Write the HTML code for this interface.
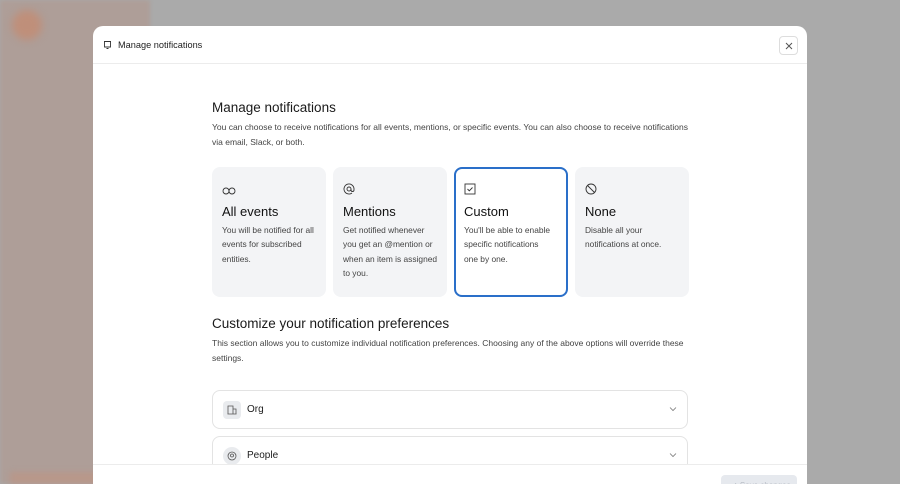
<!DOCTYPE html>
<html><head><meta charset="utf-8"><style>
*{box-sizing:border-box;margin:0;padding:0}
html,body{width:900px;height:484px;overflow:hidden}
body{background:#aaaaaa;font-family:"Liberation Sans",sans-serif;position:relative;color:#1c1c1c}
.side{position:absolute;left:0;top:0;width:150px;height:484px;background:#ae9e98;filter:blur(2px)}
.blob{position:absolute;left:12px;top:10px;width:30px;height:30px;border-radius:50%;background:#bf8f7a;filter:blur(4px)}
.bar{position:absolute;left:10px;top:472px;width:130px;height:12px;background:#b8978a;filter:blur(3px)}
.modal{position:absolute;left:93px;top:26px;width:714px;height:458px;background:#fff;border-radius:10px 10px 0 0;overflow:hidden}
.hdr{height:38px;border-bottom:1px solid #ececec;display:flex;align-items:center;padding-left:10px;font-size:9.2px;color:#222}
.hdr svg{margin-right:6px}
.close{position:absolute;right:9px;top:10px;width:19px;height:19px;border:1px solid #ddd;border-radius:4px;display:flex;align-items:center;justify-content:center}
.c{position:absolute;left:119px;width:478px}
h2{font-size:13.5px;font-weight:normal;color:#1a1a1a}
p.d{font-size:8.5px;line-height:14.5px;color:#444;margin-top:5px}
.cards{position:absolute;left:119px;top:141px;display:flex;gap:7px}
.card{width:114px;height:130px;background:#f3f4f6;border-radius:8px;padding:15px 8px 15px 10px}
.card.sel{background:#fff;border:2px solid #2a6fc9;padding:13px 10px 13px 8px}
.card h3{font-size:13px;font-weight:normal;margin-top:4px;color:#111}
.card p{font-size:8.4px;line-height:14.3px;color:#444;margin-top:4px}
.acc{position:absolute;left:119px;width:476px;height:39px;border:1px solid #e3e3e3;border-radius:8px;display:flex;align-items:center;padding-left:10px;font-size:10px}
.ico{width:18px;height:18px;background:#e9ebee;border-radius:4px;margin-right:6px;display:flex;align-items:center;justify-content:center}
.chev{position:absolute;right:10px;top:14px}
.foot{position:absolute;left:0;top:438px;width:714px;height:42px;background:#fff;border-top:1px solid #ececec}
.save{position:absolute;right:10px;top:10px;width:76px;height:22px;background:#e6e9ee;border-radius:4px;font-size:8px;color:#b5bac2;padding:6px 0 0 10px}
</style></head><body>
<div class="side"></div><div class="blob"></div><div class="bar"></div>
<div class="modal">
<div class="hdr"><svg width="9" height="10" viewBox="0 0 9 10" fill="none" stroke="#333" stroke-width="0.9"><path d="M1 1.5h7M1.5 1.5v5.5h6V1.5M3.5 8.5h2"/></svg>Manage notifications</div>
<div class="close"><svg width="8" height="8" viewBox="0 0 8 8" stroke="#555" stroke-width="1"><path d="M1 1l6 6M7 1L1 7"/></svg></div>
<div class="c" style="top:74px"><h2>Manage notifications</h2><p class="d">You can choose to receive notifications for all events, mentions, or specific events. You can also choose to receive notifications via email, Slack, or both.</p></div>
<div class="cards">
<div class="card"><svg width="14" height="8" viewBox="0 0 14 8" fill="none" stroke="#333" stroke-width="0.9"><circle cx="4" cy="4" r="3"/><circle cx="10" cy="4" r="3"/></svg><h3>All events</h3><p>You will be notified for all events for subscribed entities.</p></div>
<div class="card"><svg width="12" height="12" viewBox="0 0 12 12" fill="none" stroke="#333" stroke-width="0.9"><circle cx="6" cy="6" r="2"/><path d="M8 6v1a1.5 1.5 0 003 0V6a5 5 0 10-2 4"/></svg><h3>Mentions</h3><p>Get notified whenever you get an @mention or when an item is assigned to you.</p></div>
<div class="card sel"><svg width="12" height="12" viewBox="0 0 12 12" fill="none" stroke="#333" stroke-width="0.9"><rect x="1" y="1" width="10" height="10"/><path d="M3.5 6l1.8 1.8L8.5 4.5"/></svg><h3>Custom</h3><p>You'll be able to enable specific notifications<br>one by one.</p></div>
<div class="card"><svg width="12" height="12" viewBox="0 0 12 12" fill="none" stroke="#333" stroke-width="0.9"><circle cx="6" cy="6" r="5"/><path d="M2.5 2.5l7 7"/></svg><h3>None</h3><p>Disable all your notifications at once.</p></div>
</div>
<div class="c" style="top:290px"><h2>Customize your notification preferences</h2><p class="d">This section allows you to customize individual notification preferences. Choosing any of the above options will override these settings.</p></div>
<div class="acc" style="top:364px"><div class="ico"><svg width="10" height="10" viewBox="0 0 10 10" fill="none" stroke="#555" stroke-width="0.8"><path d="M1 9V1h5v8M6 4h3v5M0.5 9h9"/></svg></div>Org<svg class="chev" width="8" height="8" viewBox="0 0 8 8" fill="none" stroke="#777" stroke-width="0.8"><path d="M1 2.5l3 3 3-3"/></svg></div>
<div class="acc" style="top:410px"><div class="ico" style="border-radius:50%"><svg width="10" height="10" viewBox="0 0 10 10" fill="none" stroke="#555" stroke-width="0.8"><circle cx="5" cy="5" r="4"/><circle cx="5" cy="4.5" r="1.5"/></svg></div>People<svg class="chev" width="8" height="8" viewBox="0 0 8 8" fill="none" stroke="#777" stroke-width="0.8"><path d="M1 2.5l3 3 3-3"/></svg></div>
<div class="foot"><div class="save">✓ Save changes</div></div>
</div>
</body></html>
